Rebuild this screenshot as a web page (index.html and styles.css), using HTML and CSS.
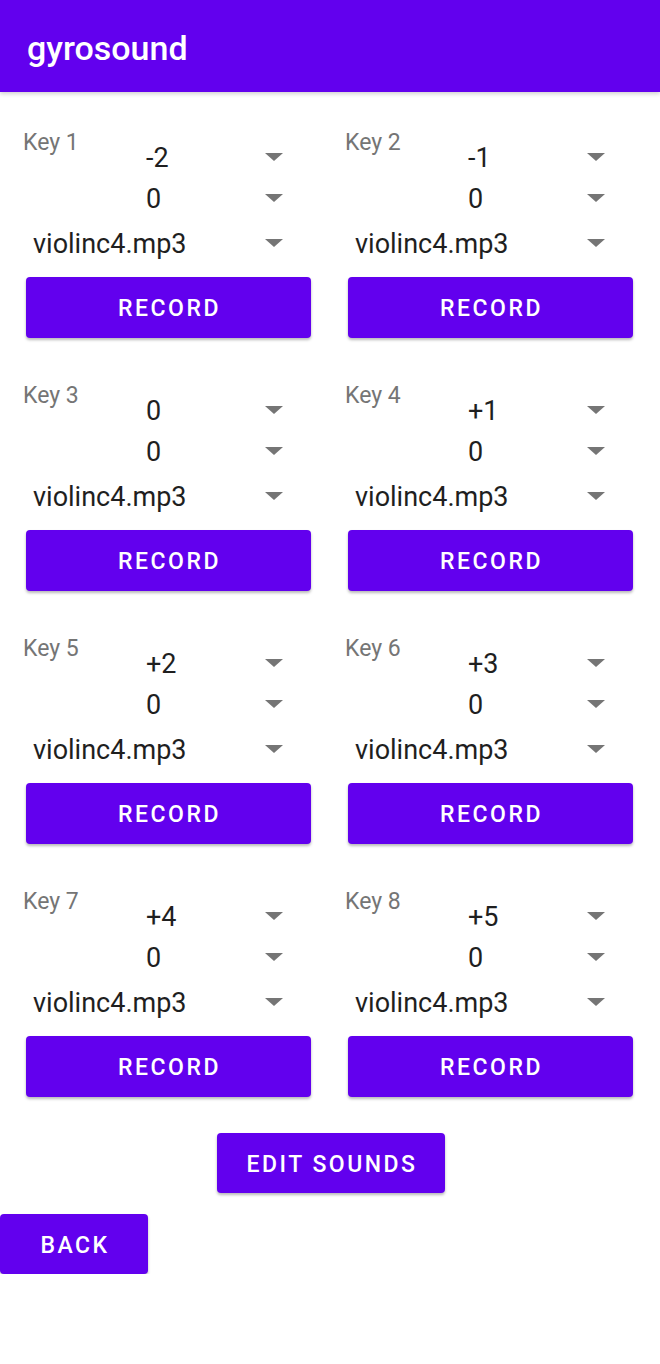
FILE: index.html
```html
<!DOCTYPE html>
<html lang="en">
<head>
<meta charset="utf-8">
<title>gyrosound</title>
<link rel="stylesheet" href="styles.css">
</head>
<body>
<header class="appbar"><h1 class="title">gyrosound</h1></header>
<main class="content">
  <div class="keys">
    <section class="key">
      <div class="key-label">Key 1</div>
      <div class="spinner"><span class="sp-text num">-2</span><svg class="arrow" viewBox="0 0 18 8"><polygon points="0,0 18,0 9,8"/></svg></div>
      <div class="spinner s2"><span class="sp-text num">0</span><svg class="arrow" viewBox="0 0 18 8"><polygon points="0,0 18,0 9,8"/></svg></div>
      <div class="spinner s3"><span class="sp-text file">violinc4.mp3</span><svg class="arrow" viewBox="0 0 18 8"><polygon points="0,0 18,0 9,8"/></svg></div>
      <button class="btn record">RECORD</button>
    </section>
    <section class="key">
      <div class="key-label">Key 2</div>
      <div class="spinner"><span class="sp-text num">-1</span><svg class="arrow" viewBox="0 0 18 8"><polygon points="0,0 18,0 9,8"/></svg></div>
      <div class="spinner s2"><span class="sp-text num">0</span><svg class="arrow" viewBox="0 0 18 8"><polygon points="0,0 18,0 9,8"/></svg></div>
      <div class="spinner s3"><span class="sp-text file">violinc4.mp3</span><svg class="arrow" viewBox="0 0 18 8"><polygon points="0,0 18,0 9,8"/></svg></div>
      <button class="btn record">RECORD</button>
    </section>
    <section class="key">
      <div class="key-label">Key 3</div>
      <div class="spinner"><span class="sp-text num">0</span><svg class="arrow" viewBox="0 0 18 8"><polygon points="0,0 18,0 9,8"/></svg></div>
      <div class="spinner s2"><span class="sp-text num">0</span><svg class="arrow" viewBox="0 0 18 8"><polygon points="0,0 18,0 9,8"/></svg></div>
      <div class="spinner s3"><span class="sp-text file">violinc4.mp3</span><svg class="arrow" viewBox="0 0 18 8"><polygon points="0,0 18,0 9,8"/></svg></div>
      <button class="btn record">RECORD</button>
    </section>
    <section class="key">
      <div class="key-label">Key 4</div>
      <div class="spinner"><span class="sp-text num">+1</span><svg class="arrow" viewBox="0 0 18 8"><polygon points="0,0 18,0 9,8"/></svg></div>
      <div class="spinner s2"><span class="sp-text num">0</span><svg class="arrow" viewBox="0 0 18 8"><polygon points="0,0 18,0 9,8"/></svg></div>
      <div class="spinner s3"><span class="sp-text file">violinc4.mp3</span><svg class="arrow" viewBox="0 0 18 8"><polygon points="0,0 18,0 9,8"/></svg></div>
      <button class="btn record">RECORD</button>
    </section>
    <section class="key">
      <div class="key-label">Key 5</div>
      <div class="spinner"><span class="sp-text num">+2</span><svg class="arrow" viewBox="0 0 18 8"><polygon points="0,0 18,0 9,8"/></svg></div>
      <div class="spinner s2"><span class="sp-text num">0</span><svg class="arrow" viewBox="0 0 18 8"><polygon points="0,0 18,0 9,8"/></svg></div>
      <div class="spinner s3"><span class="sp-text file">violinc4.mp3</span><svg class="arrow" viewBox="0 0 18 8"><polygon points="0,0 18,0 9,8"/></svg></div>
      <button class="btn record">RECORD</button>
    </section>
    <section class="key">
      <div class="key-label">Key 6</div>
      <div class="spinner"><span class="sp-text num">+3</span><svg class="arrow" viewBox="0 0 18 8"><polygon points="0,0 18,0 9,8"/></svg></div>
      <div class="spinner s2"><span class="sp-text num">0</span><svg class="arrow" viewBox="0 0 18 8"><polygon points="0,0 18,0 9,8"/></svg></div>
      <div class="spinner s3"><span class="sp-text file">violinc4.mp3</span><svg class="arrow" viewBox="0 0 18 8"><polygon points="0,0 18,0 9,8"/></svg></div>
      <button class="btn record">RECORD</button>
    </section>
    <section class="key">
      <div class="key-label">Key 7</div>
      <div class="spinner"><span class="sp-text num">+4</span><svg class="arrow" viewBox="0 0 18 8"><polygon points="0,0 18,0 9,8"/></svg></div>
      <div class="spinner s2"><span class="sp-text num">0</span><svg class="arrow" viewBox="0 0 18 8"><polygon points="0,0 18,0 9,8"/></svg></div>
      <div class="spinner s3"><span class="sp-text file">violinc4.mp3</span><svg class="arrow" viewBox="0 0 18 8"><polygon points="0,0 18,0 9,8"/></svg></div>
      <button class="btn record">RECORD</button>
    </section>
    <section class="key">
      <div class="key-label">Key 8</div>
      <div class="spinner"><span class="sp-text num">+5</span><svg class="arrow" viewBox="0 0 18 8"><polygon points="0,0 18,0 9,8"/></svg></div>
      <div class="spinner s2"><span class="sp-text num">0</span><svg class="arrow" viewBox="0 0 18 8"><polygon points="0,0 18,0 9,8"/></svg></div>
      <div class="spinner s3"><span class="sp-text file">violinc4.mp3</span><svg class="arrow" viewBox="0 0 18 8"><polygon points="0,0 18,0 9,8"/></svg></div>
      <button class="btn record">RECORD</button>
    </section>
  </div>
  <div class="edit-row"><button class="btn edit">EDIT SOUNDS</button></div>
  <button class="btn back">BACK</button>
</main>
</body>
</html>
```

FILE: styles.css
```css
* { box-sizing: border-box; }
html, body { margin: 0; padding: 0; background: #ffffff; }
body { font-family: Roboto, "Noto Sans", "Liberation Sans", sans-serif; color: #212121; width: 660px; }

.appbar {
  height: 92px;
  background: #6200ee;
  padding: 0 0 0 27px;
  display: flex;
  align-items: center;
  box-shadow: 0 2px 4px rgba(0,0,0,0.18);
  position: relative;
  z-index: 1;
}
.title {
  margin: 0;
  padding-top: 4px;
  font-size: 34px;
  font-weight: 500;
  color: #ffffff;
  line-height: 40px;
}

.content { padding-top: 37px; }

.keys {
  display: grid;
  grid-template-columns: 299px 299px;
  column-gap: 23px;
  row-gap: 44px;
  padding-left: 23px;
}
.key { display: flex; flex-direction: column; }

.key-label {
  font-size: 23px;
  line-height: 27px;
  color: #757575;
  margin-bottom: -13px;
}

.spinner {
  display: flex;
  align-items: center;
  height: 30px;
  padding-right: 39px;
}
.spinner.s2 { margin-top: 11px; }
.spinner.s3 { margin-top: 15px; }
.sp-text {
  flex: 1;
  font-size: 27px;
  line-height: 30px;
  color: #1f1f1f;
  white-space: nowrap;
}
.sp-text.num { padding-left: 123px; }
.sp-text.file { padding-left: 10px; }
.arrow {
  width: 18px;
  height: 8px;
  fill: #757575;
  margin-top: -2px;
}

.btn {
  display: block;
  border: 0;
  background: #6200ee;
  color: #ffffff;
  font-family: Roboto, "Noto Sans", "Liberation Sans", sans-serif;
  font-weight: 500;
  font-size: 23px;
  letter-spacing: 2.5px;
  border-radius: 4px;
  box-shadow: 0 2px 3px rgba(0,0,0,0.28);
  padding: 2px 0 0 2px;
  cursor: pointer;
}
.btn.record {
  margin: 18px 0 0 3px;
  width: 285px;
  height: 61px;
}
.edit-row {
  display: flex;
  justify-content: center;
  margin-top: 36px;
}
.btn.edit { width: 228px; height: 60px; margin-left: 2px; }
.btn.back { width: 148px; height: 60px; margin-top: 21px; }
```
